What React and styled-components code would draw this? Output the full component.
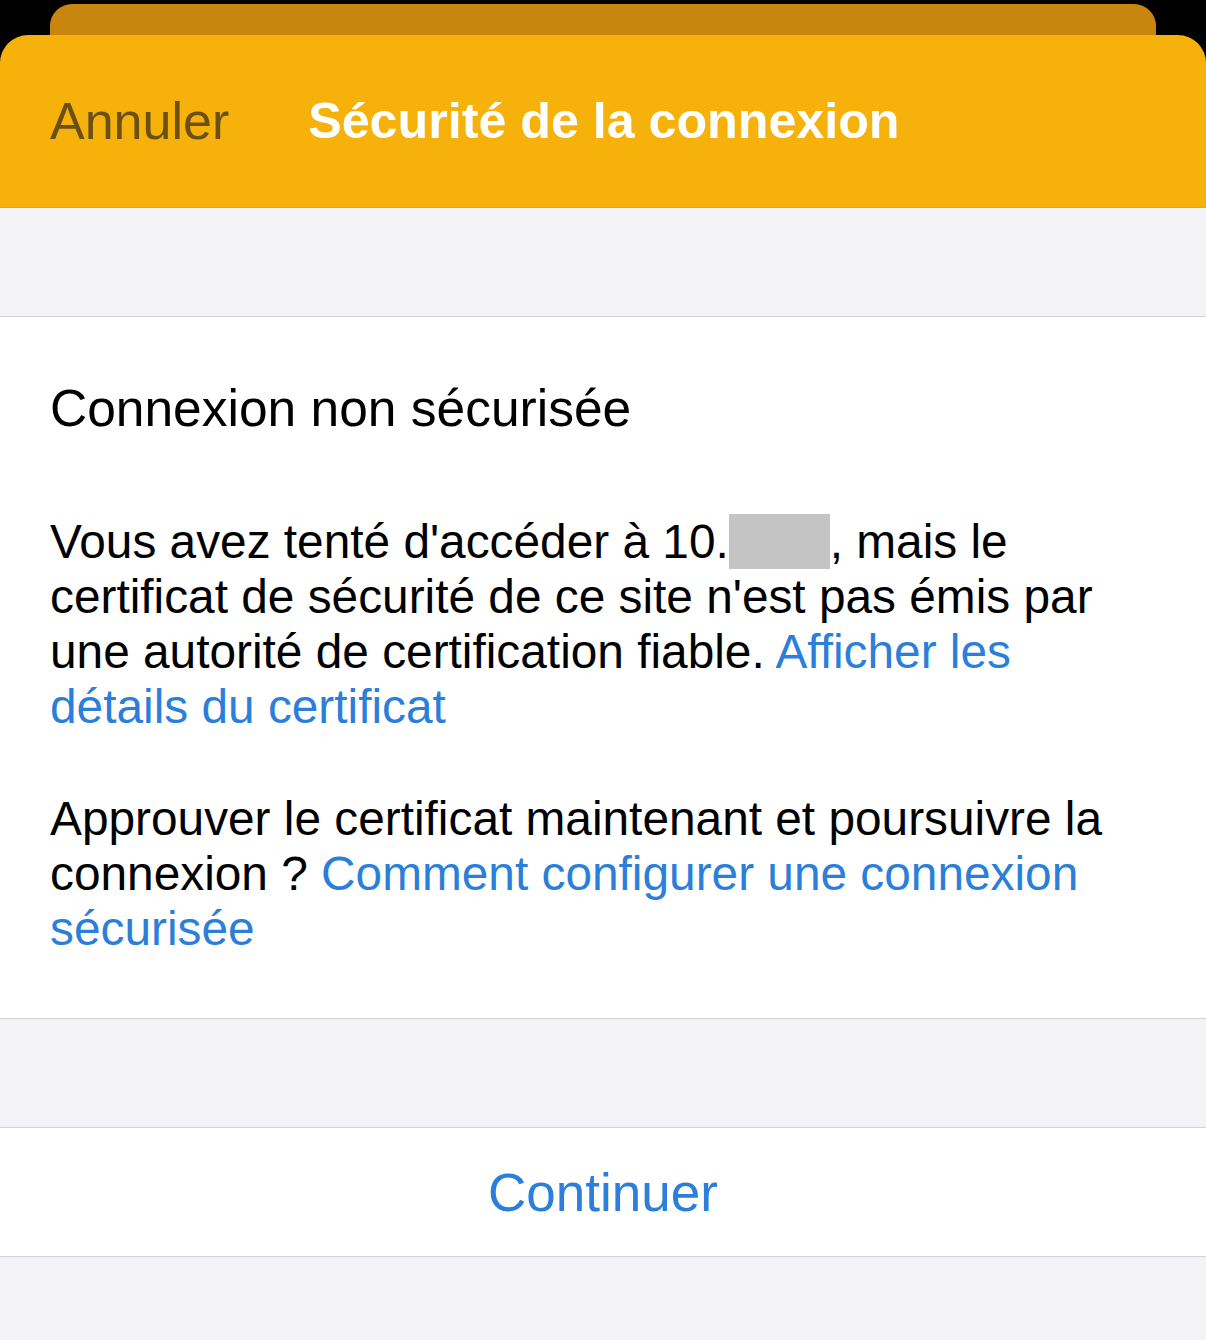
import styled, { createGlobalStyle } from "styled-components";

const GlobalStyle = createGlobalStyle`
  html, body {
    margin: 0;
    padding: 0;
    background: #f2f2f7;
  }
  body {
    font-family: "Liberation Sans", Arial, sans-serif;
    -webkit-font-smoothing: antialiased;
  }
`;

const Screen = styled.div`
  width: 1206px;
  height: 1340px;
  display: flex;
  flex-direction: column;
  background: #f2f2f7;
  overflow: hidden;
`;

const TopArea = styled.div`
  background: #000;
  padding-top: 4px;
`;

const BackCard = styled.div`
  height: 31px;
  margin: 0 50px;
  background: #c8860f;
  border-radius: 22px 22px 0 0;
`;

const NavBar = styled.header`
  height: 172px;
  display: flex;
  align-items: center;
  gap: 79px;
  padding: 0 50px;
  background: #f6b10a;
  border-radius: 28px 28px 0 0;
  border-bottom: 1px solid #d9a445;
`;

const CancelButton = styled.span`
  font-size: 52px;
  color: #6b5016;
`;

const Title = styled.h1`
  margin: 0;
  font-size: 50.2px;
  font-weight: 700;
  color: #fff;
`;

const Spacer = styled.div`
  height: 108px;
  background: #f2f2f7;
`;

const Group = styled.section`
  background: #fff;
  border-top: 1px solid #d4d4d8;
  border-bottom: 1px solid #d4d4d8;
  padding: ${(p) => p.$padding || "0 50px"};
`;

const Heading = styled.h2`
  margin: 0 0 78px;
  font-size: 51.5px;
  font-weight: 400;
  line-height: 55px;
  color: #000;
`;

const Paragraph = styled.p`
  margin: 0 0 57px;
  font-size: 47.8px;
  line-height: 55px;
  color: #000;

  &:last-child {
    margin-bottom: 0;
  }
`;

const Link = styled.a`
  color: #2b7fdb;
  text-decoration: none;
`;

const Redacted = styled.span`
  display: inline-block;
  width: 101px;
  height: 55px;
  background: #c4c4c4;
  vertical-align: top;
`;

const ActionRow = styled.button`
  width: 100%;
  height: 130px;
  border: none;
  border-top: 1px solid #d4d4d8;
  border-bottom: 1px solid #d4d4d8;
  background: #fff;
  font-family: inherit;
  font-size: 53px;
  color: #2b7fdb;
  display: flex;
  align-items: center;
  justify-content: center;
  padding: 0;
`;

export default function App() {
  return (
    <>
      <GlobalStyle />
      <Screen>
        <TopArea>
          <BackCard />
          <NavBar>
            <CancelButton>Annuler</CancelButton>
            <Title>Sécurité de la connexion</Title>
          </NavBar>
        </TopArea>
        <Spacer />
        <Group $padding="64px 50px 62px">
          <Heading>Connexion non sécurisée</Heading>
          <Paragraph>
            Vous avez tenté d'accéder à 10.<Redacted />, mais le certificat de
            sécurité de ce site n'est pas émis par une autorité de
            certification fiable. <Link>Afficher les détails du certificat</Link>
          </Paragraph>
          <Paragraph>
            Approuver le certificat maintenant et poursuivre la connexion ?{" "}
            <Link>Comment configurer une connexion sécurisée</Link>
          </Paragraph>
        </Group>
        <Spacer />
        <ActionRow>Continuer</ActionRow>
      </Screen>
    </>
  );
}
